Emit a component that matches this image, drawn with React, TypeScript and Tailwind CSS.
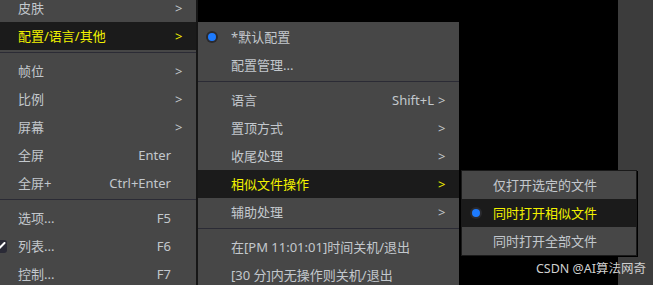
import React from "react"

type Item =
  | { sep: true }
  | { label: string; shortcut?: string; arrow?: boolean; active?: boolean; radio?: boolean; check?: boolean }

const mainItems: Item[] = [
  { label: "皮肤", arrow: true },
  { label: "配置/语言/其他", arrow: true, active: true },
  { sep: true },
  { label: "帧位", arrow: true },
  { label: "比例", arrow: true },
  { label: "屏幕", arrow: true },
  { label: "全屏", shortcut: "Enter" },
  { label: "全屏+", shortcut: "Ctrl+Enter" },
  { sep: true },
  { label: "选项...", shortcut: "F5" },
  { label: "列表...", shortcut: "F6", check: true },
  { label: "控制...", shortcut: "F7" },
]

const subItems: Item[] = [
  { label: "*默认配置", radio: true },
  { label: "配置管理..." },
  { sep: true },
  { label: "语言", shortcut: "Shift+L", arrow: true },
  { label: "置顶方式", arrow: true },
  { label: "收尾处理", arrow: true },
  { label: "相似文件操作", arrow: true, active: true },
  { label: "辅助处理", arrow: true },
  { sep: true },
  { label: "在[PM 11:01:01]时间关机/退出" },
  { label: "[30 分]内无操作则关机/退出" },
]

const fileItems: Item[] = [
  { label: "仅打开选定的文件" },
  { label: "同时打开相似文件", radio: true, active: true },
  { label: "同时打开全部文件" },
]

function Radio() {
  return (
    <span className="flex h-[12px] w-[12px] items-center justify-center rounded-full bg-[#2a2a2e]">
      <span className="h-[8px] w-[8px] rounded-full bg-[#1d7bff]" />
    </span>
  )
}

function Separator() {
  return (
    <div className="flex h-[7px] items-start pt-[2px]">
      <div className="h-[1px] w-full bg-[#2b2b35]" />
    </div>
  )
}

function Row({ item, pl }: { item: Item; pl: string }) {
  if ("sep" in item) return <Separator />
  return (
    <div
      className={`relative flex h-[28px] items-center ${pl} pr-[14px] ${
        item.active ? "bg-[#1b1b1b] text-[#f2f200]" : "text-[#c3c8cd]"
      }`}
    >
      {item.radio && (
        <span className="absolute left-[8px] top-[8px]">
          <Radio />
        </span>
      )}
      {item.check && (
        <span className="absolute left-[-7px] top-[8px] flex h-[13px] w-[14px] items-center justify-center rounded-[3px] bg-[#2a2a36]">
          <svg width="9" height="9" viewBox="0 0 9 9" className="ml-[3px]">
            <path d="M1 7.5 L7.5 1" stroke="#ffffff" strokeWidth="2" strokeLinecap="round" />
          </svg>
        </span>
      )}
      <span className="flex-1 whitespace-nowrap">{item.label}</span>
      {item.shortcut && <span className="mr-[4px] whitespace-nowrap">{item.shortcut}</span>}
      {item.arrow && <span className="w-[7px] text-right">&gt;</span>}
      {!item.arrow && item.shortcut && <span className="w-[7px]" />}
    </div>
  )
}

export default function App() {
  return (
    <div
      className="relative flex h-[285px] w-[653px] overflow-hidden bg-black text-[13px] leading-none"
      style={{ fontFamily: '"Noto Sans", "Noto Sans CJK SC", sans-serif' }}
    >
      <div className="flex-1" />
      <div className="w-[35px] bg-[#3c3c3c]" />

      {/* main menu */}
      <div className="absolute left-0 top-[-6px] w-[198px] border-r-2 border-[#161616] bg-[#474747]">
        {mainItems.map((it, i) => (
          <Row key={i} item={it} pl="pl-[18px]" />
        ))}
      </div>

      {/* submenu */}
      <div className="absolute left-[198px] top-[22px] w-[261px] bg-[#474747] pt-[1px]">
        {subItems.map((it, i) => (
          <Row key={i} item={it} pl="pl-[33px]" />
        ))}
      </div>

      {/* similar files submenu */}
      <div className="absolute left-[461px] top-[170px] w-[176px] border border-[#1a1a1a] bg-[#474747] shadow-[1px_1px_0_#000]">
        {fileItems.map((it, i) => (
          <Row key={i} item={it} pl="pl-[31px]" />
        ))}
      </div>

      <div className="absolute right-[7px] top-[263px] whitespace-nowrap text-[12.5px] text-[#d0d0d0]">
        CSDN @AI算法网奇
      </div>
    </div>
  )
}
